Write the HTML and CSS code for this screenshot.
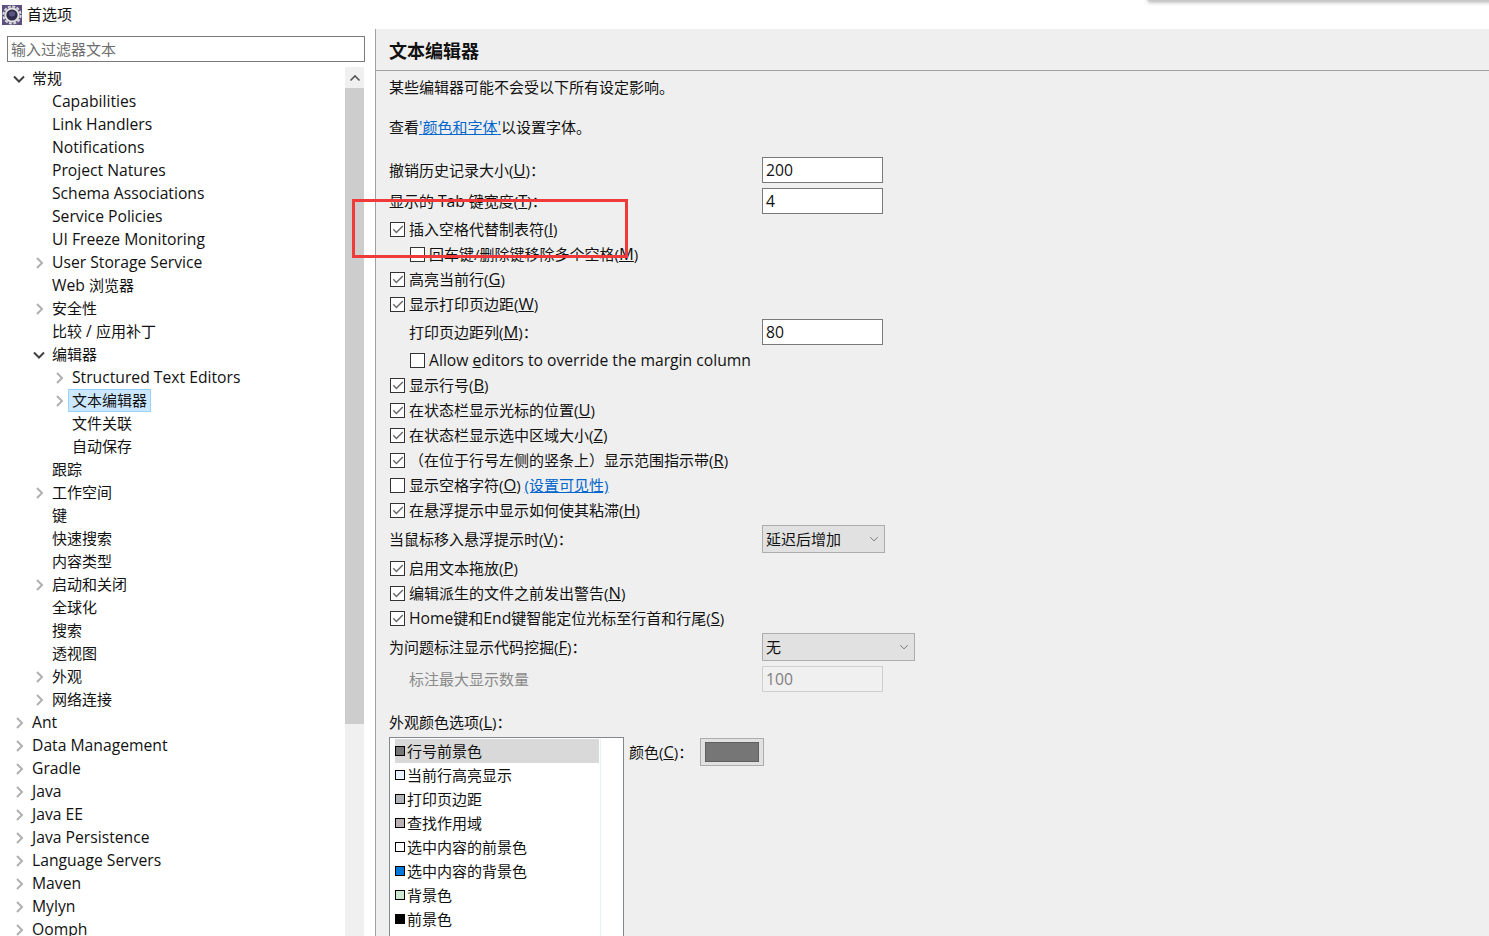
FILE: index.html
```html
<!DOCTYPE html>
<html lang="zh-CN">
<head>
<meta charset="utf-8">
<title>首选项</title>
<link rel="stylesheet" href="styles.css">
</head>
<body>
<svg class="defs" width="0" height="0" aria-hidden="true">
  <symbol id="chk" viewBox="0 0 13 13"><path d="M2.3 6.3 5.4 9.4 11.8 2.9" fill="none" stroke="#666" stroke-width="1.4"/></symbol>
  <symbol id="tw-open" viewBox="0 0 12 12"><path d="M1 3.5 6 8.5 11 3.5" fill="none" stroke="#404040" stroke-width="2"/></symbol>
  <symbol id="tw-closed" viewBox="0 0 12 12"><path d="M4 1 9 6 4 11" fill="none" stroke="#b0b0b0" stroke-width="2"/></symbol>
  <symbol id="combo" viewBox="0 0 12 8"><path d="M1 1.5 6 6.5 11 1.5" fill="none" stroke="#555" stroke-width="1"/></symbol>
</svg>
<div class="shadow"></div>
<div class="app">
  <header class="titlebar">
    <svg class="appicon" viewBox="0 0 20 20" aria-hidden="true">
      <rect width="20" height="20" fill="#5d4f80"/>
      <circle cx="10" cy="10" r="8.6" fill="none" stroke="#d8d8d8" stroke-width="2" stroke-dasharray="3 1.5"/>
      <circle cx="10" cy="10" r="7.6" fill="#e2e2e2"/>
      <circle cx="10" cy="10" r="5.6" fill="#2f2b4a"/>
      <ellipse cx="10" cy="8.8" rx="3.2" ry="2.6" fill="#5a5480"/>
    </svg>
    <span>首选项</span>
  </header>
  <div class="content">
    <aside class="sidebar">
      <div class="filter">输入过滤器文本</div>
      <div class="treewrap">
        <ul class="tree">
          <li class="l0"><svg class="tw"><use href="#tw-open"/></svg><span>常规</span></li>
          <li class="l1"><span class="tw"></span><span class="lat">Capabilities</span></li>
          <li class="l1"><span class="tw"></span><span class="lat">Link Handlers</span></li>
          <li class="l1"><span class="tw"></span><span class="lat">Notifications</span></li>
          <li class="l1"><span class="tw"></span><span class="lat">Project Natures</span></li>
          <li class="l1"><span class="tw"></span><span class="lat">Schema Associations</span></li>
          <li class="l1"><span class="tw"></span><span class="lat">Service Policies</span></li>
          <li class="l1"><span class="tw"></span><span class="lat">UI Freeze Monitoring</span></li>
          <li class="l1"><svg class="tw"><use href="#tw-closed"/></svg><span class="lat">User Storage Service</span></li>
          <li class="l1"><span class="tw"></span><span><span class="lat">Web </span>浏览器</span></li>
          <li class="l1"><svg class="tw"><use href="#tw-closed"/></svg><span>安全性</span></li>
          <li class="l1"><span class="tw"></span><span>比较<span class="lat"> / </span>应用补丁</span></li>
          <li class="l1"><svg class="tw"><use href="#tw-open"/></svg><span>编辑器</span></li>
          <li class="l2"><svg class="tw"><use href="#tw-closed"/></svg><span class="lat">Structured Text Editors</span></li>
          <li class="l2"><svg class="tw"><use href="#tw-closed"/></svg><span class="selected">文本编辑器</span></li>
          <li class="l2"><span class="tw"></span><span>文件关联</span></li>
          <li class="l2"><span class="tw"></span><span>自动保存</span></li>
          <li class="l1"><span class="tw"></span><span>跟踪</span></li>
          <li class="l1"><svg class="tw"><use href="#tw-closed"/></svg><span>工作空间</span></li>
          <li class="l1"><span class="tw"></span><span>键</span></li>
          <li class="l1"><span class="tw"></span><span>快速搜索</span></li>
          <li class="l1"><span class="tw"></span><span>内容类型</span></li>
          <li class="l1"><svg class="tw"><use href="#tw-closed"/></svg><span>启动和关闭</span></li>
          <li class="l1"><span class="tw"></span><span>全球化</span></li>
          <li class="l1"><span class="tw"></span><span>搜索</span></li>
          <li class="l1"><span class="tw"></span><span>透视图</span></li>
          <li class="l1"><svg class="tw"><use href="#tw-closed"/></svg><span>外观</span></li>
          <li class="l1"><svg class="tw"><use href="#tw-closed"/></svg><span>网络连接</span></li>
          <li class="l0"><svg class="tw"><use href="#tw-closed"/></svg><span class="lat">Ant</span></li>
          <li class="l0"><svg class="tw"><use href="#tw-closed"/></svg><span class="lat">Data Management</span></li>
          <li class="l0"><svg class="tw"><use href="#tw-closed"/></svg><span class="lat">Gradle</span></li>
          <li class="l0"><svg class="tw"><use href="#tw-closed"/></svg><span class="lat">Java</span></li>
          <li class="l0"><svg class="tw"><use href="#tw-closed"/></svg><span class="lat">Java EE</span></li>
          <li class="l0"><svg class="tw"><use href="#tw-closed"/></svg><span class="lat">Java Persistence</span></li>
          <li class="l0"><svg class="tw"><use href="#tw-closed"/></svg><span class="lat">Language Servers</span></li>
          <li class="l0"><svg class="tw"><use href="#tw-closed"/></svg><span class="lat">Maven</span></li>
          <li class="l0"><svg class="tw"><use href="#tw-closed"/></svg><span class="lat">Mylyn</span></li>
          <li class="l0"><svg class="tw"><use href="#tw-closed"/></svg><span class="lat">Oomph</span></li>
        </ul>
        <div class="scrollbar">
          <div class="scrollup"><svg viewBox="0 0 12 8"><path d="M1.5 6.5 6 2 10.5 6.5" fill="none" stroke="#555" stroke-width="1.6"/></svg></div>
          <div class="thumb"></div>
        </div>
      </div>
    </aside>
    <main class="panel">
      <h1 class="heading">文本编辑器</h1>
      <div class="form">
        <p class="row text">某些编辑器可能不会受以下所有设定影响。</p>
        <p class="row text g16">查看<a href="#"><span class="lat">'</span>颜色和字体<span class="lat">'</span></a>以设置字体。</p>
        <div class="field g18"><label class="flabel">撤销历史记录大小(<u>U</u>)：</label><div class="input lat">200</div></div>
        <div class="field g5"><label class="flabel">显示的 <span class="lat">Tab</span> 键宽度(<u>T</u>)：</label><div class="input lat">4</div></div>
        <label class="check g3"><span class="box"><svg><use href="#chk"/></svg></span><span>插入空格代替制表符(<u>I</u>)</span></label>
        <label class="check sub"><span class="box"></span><span>回车键/删除键移除多个空格(<u>M</u>)</span></label>
        <label class="check"><span class="box"><svg><use href="#chk"/></svg></span><span>高亮当前行(<u>G</u>)</span></label>
        <label class="check"><span class="box"><svg><use href="#chk"/></svg></span><span>显示打印页边距(<u>W</u>)</span></label>
        <div class="field g2"><label class="flabel indent">打印页边距列(<u>M</u>)：</label><div class="input lat">80</div></div>
        <label class="check sub g3"><span class="box"></span><span class="lat">Allow <u>e</u>ditors to override the margin column</span></label>
        <label class="check"><span class="box"><svg><use href="#chk"/></svg></span><span>显示行号(<u>B</u>)</span></label>
        <label class="check"><span class="box"><svg><use href="#chk"/></svg></span><span>在状态栏显示光标的位置(<u>U</u>)</span></label>
        <label class="check"><span class="box"><svg><use href="#chk"/></svg></span><span>在状态栏显示选中区域大小(<u>Z</u>)</span></label>
        <label class="check"><span class="box"><svg><use href="#chk"/></svg></span><span>（在位于行号左侧的竖条上）显示范围指示带(<u>R</u>)</span></label>
        <label class="check"><span class="box"></span><span>显示空格字符(<u>O</u>) <a href="#">(设置可见性)</a></span></label>
        <label class="check"><span class="box"><svg><use href="#chk"/></svg></span><span>在悬浮提示中显示如何使其粘滞(<u>H</u>)</span></label>
        <div class="field g2 tall"><label class="flabel">当鼠标移入悬浮提示时(<u>V</u>)：</label><div class="combo short"><span>延迟后增加</span><svg><use href="#combo"/></svg></div></div>
        <label class="check g3"><span class="box"><svg><use href="#chk"/></svg></span><span>启用文本拖放(<u>P</u>)</span></label>
        <label class="check"><span class="box"><svg><use href="#chk"/></svg></span><span>编辑派生的文件之前发出警告(<u>N</u>)</span></label>
        <label class="check"><span class="box"><svg><use href="#chk"/></svg></span><span><span class="lat">Home</span>键和<span class="lat">End</span>键智能定位光标至行首和行尾(<u>S</u>)</span></label>
        <div class="field g2 tall"><label class="flabel">为问题标注显示代码挖掘(<u>F</u>)：</label><div class="combo wide"><span>无</span><svg><use href="#combo"/></svg></div></div>
        <div class="field g5"><label class="flabel indent muted">标注最大显示数量</label><div class="input disabled lat">100</div></div>
        <p class="row text g18">外观颜色选项(<u>L</u>)：</p>
        <div class="colors g3">
          <div class="list">
            <ul class="listinner">
              <li class="active"><i class="sw c1"></i><span>行号前景色</span></li>
              <li><i class="sw c2"></i><span>当前行高亮显示</span></li>
              <li><i class="sw c3"></i><span>打印页边距</span></li>
              <li><i class="sw c4"></i><span>查找作用域</span></li>
              <li><i class="sw c5"></i><span>选中内容的前景色</span></li>
              <li><i class="sw c6"></i><span>选中内容的背景色</span></li>
              <li><i class="sw c7"></i><span>背景色</span></li>
              <li><i class="sw c8"></i><span>前景色</span></li>
            </ul>
          </div>
          <span class="colorlabel">颜色(<u>C</u>)：</span>
          <div class="colorbtn"><div class="colorfill"></div></div>
        </div>
      </div>
    </main>
  </div>
</div>
<div class="redbox"></div>
</body>
</html>
```
FILE: styles.css
```css
* { box-sizing: border-box; }
html, body { margin: 0; height: 936px; overflow: hidden; }
body {
  background: #fff;
  color: #111;
  font: 15px/23px "Open Sans", "Noto Sans CJK SC", sans-serif;
}
.defs { position: absolute; }
.lat { font-size: 15.7px; }
u { font-size: 16.5px; line-height: 1; }
.lat u { font-size: inherit; }
.app { display: flex; flex-direction: column; height: 936px; }
.titlebar {
  height: 29px;
  flex: none;
  display: flex;
  align-items: center;
  gap: 5px;
  padding-left: 2px;
  font-size: 15px;
}
.appicon { width: 20px; height: 20px; }
.content { flex: 1; display: flex; min-height: 0; }

.sidebar { width: 376px; flex: none; border-right: 1px solid #a0a0a0; padding: 7px 0 0 7px; display: flex; flex-direction: column; min-height: 0; }
.filter {
  width: 358px; height: 26px; flex: none;
  border: 1px solid #7a7a7a;
  padding-left: 3px;
  line-height: 24px;
  color: #6d6d6d;
}
.treewrap { display: flex; margin: 5px 0 0 -7px; flex: 1; min-height: 0; }
.tree { list-style: none; margin: 0; padding: 0; width: 345px; flex: none; }
.tree li { height: 23px; display: flex; align-items: center; white-space: nowrap; }
.l0 { padding-left: 13px; }
.l1 { padding-left: 33px; }
.l2 { padding-left: 53px; }
.tw { width: 12px; height: 12px; margin-right: 7px; flex: none; }
.selected {
  background: #cce8ff;
  border: 1px solid #99d1ff;
  height: 23px;
  line-height: 21px;
  margin-left: -4px;
  padding: 0 3px;
}
.scrollbar { width: 19px; flex: none; background: #f0f0f0; }
.scrollup { height: 21px; display: flex; align-items: center; justify-content: center; }
.scrollup svg { width: 12px; height: 8px; }
.thumb { height: 636px; background: #cdcdcd; }

.panel { flex: 1; background: #efefef; min-width: 0; }
.heading {
  margin: 0;
  height: 42px;
  padding: 9px 0 0 13px;
  font-size: 18px;
  line-height: 26px;
  font-weight: 700;
  border-bottom: 1px solid #a0a0a0;
}
.form { display: flex; flex-direction: column; padding: 4px 0 0 13px; }
.row { margin: 0; }
.text { height: 24px; line-height: 24px; }
.g2 { margin-top: 2px; }
.g3 { margin-top: 3px; }
.g5 { margin-top: 5px; }
.g16 { margin-top: 16px; }
.g18 { margin-top: 18px; }
a { color: #0066cc; text-decoration: underline; }
.field { display: flex; align-items: center; height: 26px; }
.field.tall { height: 28px; }
.flabel { width: 373px; flex: none; white-space: nowrap; }
.indent { padding-left: 20px; }
.muted { color: #8a8a8a; }
.input {
  width: 121px; height: 26px;
  background: #fff;
  border: 1px solid #7a7a7a;
  padding-left: 3px;
  line-height: 24px;
}
.input.disabled { background: #f0f0f0; border-color: #cfcfcf; color: #7f7f7f; }
.combo {
  height: 28px;
  background: #e1e1e1;
  border: 1px solid #adadad;
  padding-left: 3px;
  line-height: 26px;
  display: flex;
  justify-content: space-between;
  align-items: center;
  padding-right: 5px;
}
.combo svg { width: 10px; height: 6px; }
.short { width: 123px; }
.wide { width: 153px; }
.check { height: 25px; display: flex; align-items: center; gap: 4px; padding-left: 1px; white-space: nowrap; }
.check.sub { padding-left: 21px; }
.box {
  width: 15px; height: 15px; flex: none;
  background: #fff;
  border: 1px solid #333;
  display: block;
}
.box svg { width: 13px; height: 13px; display: block; }

.colors { display: flex; align-items: flex-start; height: 199px; }
.list {
  padding: 1px 0 0 5px;
  width: 235px;
  height: 210px;
  background: #fff;
  border: 1px solid #828790;
  flex: none;
}
.listinner { list-style: none; margin: 0; padding: 0; width: 206px; height: 100%; border-right: 1px solid #e8f1fc; }
.listinner li { width: 204px; height: 24px; display: flex; align-items: center; gap: 2px; }
.listinner li.active { background: #d9d9d9; }
.sw { width: 10px; height: 10px; border: 1px solid #000; flex: none; }
.c1 { background: #767676; }
.c2 { background: #e8f2fe; }
.c3 { background: #b0b4b9; }
.c4 { background: #b9b1b3; }
.c5 { background: #fff; }
.c6 { background: #0078d7; }
.c7 { background: #cce8cf; }
.c8 { background: #000; }
.colorlabel { margin: 3px 0 0 5px; width: 71px; line-height: 24px; white-space: nowrap; flex: none; }
.colorbtn { width: 64px; height: 28px; margin-top: 1px; background: #e1e1e1; border: 1px solid #adadad; padding: 3px 4px; flex: none; }
.colorfill { width: 100%; height: 100%; background: #767676; border: 1px solid #5f5f5f; }

.redbox {
  position: absolute;
  left: 352px; top: 199px;
  width: 276px; height: 59px;
  border: 3px solid #f03a3a;
}
.shadow {
  position: absolute;
  left: 1148px; top: -6px;
  width: 360px; height: 7px;
  background: #c8c8c8;
  box-shadow: 0 1px 4px rgba(0, 0, 0, 0.35);
}
```
